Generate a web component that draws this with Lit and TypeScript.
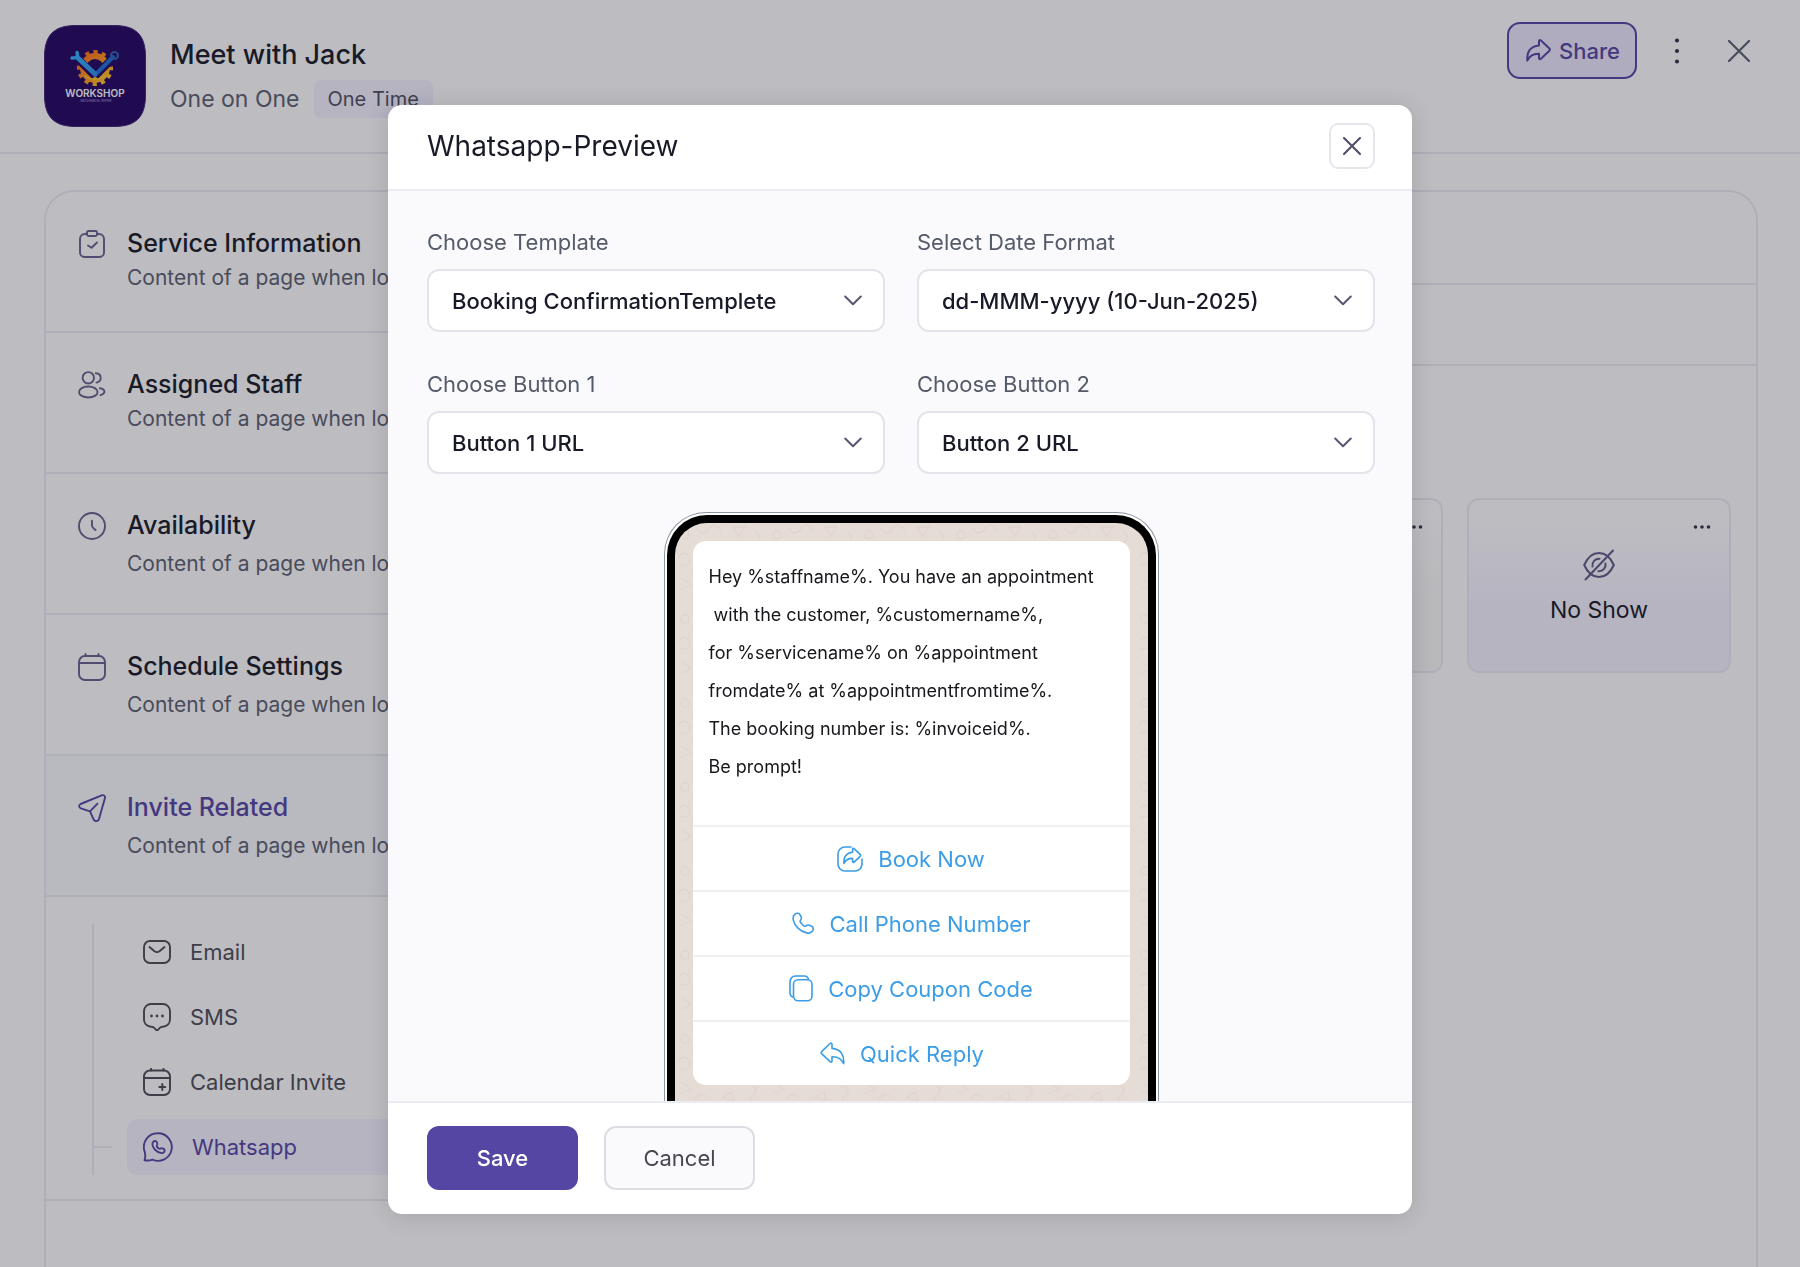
import { LitElement, html, css, svg, nothing } from "lit";
import { customElement, property } from "lit/decorators.js";
import { classMap } from "lit/directives/class-map.js";

type IconDef = { w: number; h: number; body: unknown };

const ARROW =
  "M1.3 21.6C.6 12.6 4.6 7 13 6.4V2.3c0-1.2 1-1.6 1.9-.8l8.3 7.8c.9.8.9 1.8 0 2.6l-8.3 7.8c-.9.8-1.9.4-1.9-.8v-4.1C8 14.5 4 16.5 1.3 21.6z";
const HANDSET =
  "M2.5 1.6C4.3.3 6.6.6 7.6 2.3l1 2.2c.6 1.4.3 2.4-.5 3.3-.6.8-.6 1.5 0 2.3 1 1.3 2 2.3 3.2 3.2.8.6 1.6.6 2.3 0 1-.8 2-1 3.3-.5l2.2 1c1.9.9 2.1 3.2.9 4.8-1.3 1.8-3.3 2.4-6 1.8C7.7 19 2 13.3.8 7.6.3 5 .9 2.9 2.5 1.6z";

const ICONS: Record<string, IconDef> = {
  clipboard: {
    w: 28, h: 28,
    body: svg`<path d="M9 4H7a5 5 0 0 0-5 5v13.500a4.500 4.500 0 0 0 4.500 4.500h15a4.500 4.500 0 0 0 4.500-4.500V9a5 5 0 0 0-5-5h-2"/><rect x="9" y="1" width="10" height="5" rx="1.500"/><path d="M10 15.500l3.500 2.300 5.500-5.300"/>`,
  },
  users: {
    w: 28, h: 28,
    body: svg`<circle cx="10.300" cy="6.800" r="5.700"/><ellipse cx="10.300" cy="21" rx="9.300" ry="5.500"/><path d="M17.800 2.200c3 .2 4.900 2 4.900 4.600s-1.600 4.300-4.200 4.800M21.800 17.200c2.800.4 4.600 1.600 4.600 3.400s-1.500 3-4 3.600"/>`,
  },
  clock: { w: 28, h: 28, body: svg`<circle cx="14" cy="14" r="13"/><path d="M14 8.800v5c0 1.500 1.500 2.500 3.600 4.200"/>` },
  calendar: { w: 28, h: 28, body: svg`<rect x="1" y="3" width="26" height="24" rx="6"/><path d="M1 10h26M7.500 1v2M20.500 1v2"/>` },
  plane: {
    w: 28, h: 28,
    body: svg`<path d="M2.600 10L23.600 1.300c2.200-.7 3.900.6 3.300 2.900L21 25.100c-.8 2.500-4.300 2.700-5.400.3L12 17.300 3 14.400C.7 13.600.5 10.900 2.600 10z"/><path d="M12 17.300l7.500-7.600"/>`,
  },
  mail: { w: 28, h: 28, body: svg`<rect x="1" y="3" width="26" height="22" rx="6"/><path d="M6.500 9l5 4.200c1.600 1.200 3.400 1.200 5 0l5-4.200"/>` },
  chat: {
    w: 28, h: 28,
    body: svg`<path d="M8 1h12a7 7 0 0 1 7 7v8.500a7 7 0 0 1-6 7c-3 .3-3.800.4-4.700 1.700l-1.100 1.500q-1.200 1.200-2.400 0l-1.100-1.500c-.9-1.300-1.700-1.400-4.700-1.700a7 7 0 0 1-6-7V8a7 7 0 0 1 7-7z"/><path d="M8.500 13h.01M14 13h.01M19.500 13h.01" stroke-width="2.800"/>`,
  },
  calendarPlus: {
    w: 28, h: 28,
    body: svg`<rect x="1" y="2.500" width="26" height="24.500" rx="6"/><path d="M1 10h26M8 .8v1.700M20.500 .8v1.700M19.300 16v6M16.300 19h6"/>`,
  },
  whatsapp: {
    w: 30, h: 30,
    body: svg`<path d="M15 1.200a13.800 13.800 0 1 1-5.600 26.400c-2 .9-5 1.100-7.900.7.900-2.700 1.100-5 .3-8.300A13.800 13.800 0 0 1 15 1.200z"/><path transform="translate(9 8.500) scale(.61)" stroke-width="3" d="${HANDSET}"/>`,
  },
  share: { w: 25, h: 23, body: svg`<path d="${ARROW}"/>` },
  close: { w: 22, h: 22, body: svg`<path d="M1 1l20 20M21 1L1 21"/>` },
  closeSmall: { w: 18, h: 18, body: svg`<path d="M1 1l16 16M17 1L1 17"/>` },
  chevron: { w: 18, h: 11, body: svg`<path d="M1.200 1.500L9 9.300l7.800-7.800"/>` },
  more: { w: 6, h: 26, body: svg`<path d="M3 2.500h.01M3 13h.01M3 23.500h.01" stroke-width="4.200"/>` },
  dots: { w: 18, h: 6, body: svg`<path d="M2.500 3h.01M9 3h.01M15.500 3h.01" stroke-width="3.600"/>` },
  eyeOff: {
    w: 32, h: 32,
    body: svg`<path d="M1.200 16C4.500 8.500 9.500 4 16 4s11.500 4.500 14.800 12C27.500 23.500 22.500 28 16 28S4.500 23.500 1.200 16z"/><path d="M9.500 17.500c-.6-4.500 2.500-8 7-7.800M22.500 14.500c.6 4.500-2.500 8-7 7.800M2.500 30.500L30 1.500"/>`,
  },
  bookNow: {
    w: 26, h: 26,
    body: svg`<path d="M14 1H8a7 7 0 0 0-7 7v10a7 7 0 0 0 7 7h10a7 7 0 0 0 7-7v-5"/><path transform="translate(6 1.500) scale(.74)" stroke-width="2.200" d="${ARROW}"/>`,
  },
  phone: { w: 23, h: 23, body: svg`<path transform="translate(.5 .5)" d="${HANDSET}"/>` },
  copy: {
    w: 24, h: 27,
    body: svg`<path d="M19.500 4.500c-.5-2.200-2-3.500-4.200-3.500H6.500A5.500 5.500 0 0 0 1 6.500V18c0 2.200 1.200 3.600 3.500 4.200"/><rect x="4.500" y="4.800" width="18.500" height="21" rx="4.500"/>`,
  },
  reply: { w: 25, h: 23, body: svg`<path transform="translate(25 0) scale(-1 1)" d="${ARROW}"/>` },
};

@customElement("ui-icon")
class UiIcon extends LitElement {
  @property() name = "";
  @property({ type: Number }) stroke = 1.9;

  static styles = css`
    :host { display: inline-flex; flex: none; }
    .icon { fill: none; stroke: currentColor; stroke-linecap: round; stroke-linejoin: round; }
  `;

  render() {
    const icon = ICONS[this.name];
    if (!icon) return nothing;
    return html`<svg class="icon" width=${icon.w} height=${icon.h} viewBox="0 0 ${icon.w} ${icon.h}"
      stroke-width=${this.stroke} aria-hidden="true">${icon.body}</svg>`;
  }
}

@customElement("workshop-logo")
class WorkshopLogo extends LitElement {
  static styles = css`
    :host { display: block; flex: none; }
    .logo { display: block; }
    .name { font: 600 10px Inter, sans-serif; fill: #fff; }
    .tag { font: 400 3px Inter, sans-serif; fill: #b9a8e8; }
  `;

  render() {
    return html`<svg class="logo" width="102" height="102" viewBox="0 0 102 102" role="img" aria-label="Workshop">
      <defs>
        <linearGradient id="gear" gradientUnits="userSpaceOnUse" x1="36" y1="28" x2="66" y2="58">
          <stop offset="0" stop-color="#ff6a1c" /><stop offset=".6" stop-color="#ff9f1c" /><stop offset="1" stop-color="#ffd42e" />
        </linearGradient>
        <linearGradient id="steel" gradientUnits="userSpaceOnUse" x1="30" y1="28" x2="54" y2="54">
          <stop offset="0" stop-color="#35b5ff" /><stop offset="1" stop-color="#2d86e8" />
        </linearGradient>
      </defs>
      <path d="M32 .5h38C92 .5 101.500 10 101.500 32v38c0 22-9.500 31.500-31.500 31.500H32C10 101.500.5 92 .5 70V32C.5 10 10 .5 32 .5z" fill="#220560" stroke="#43227c" />
      <g fill="none" stroke="url(#gear)">
        <circle cx="51" cy="43" r="12" stroke-width="6" />
        <circle cx="51" cy="43" r="16" stroke-width="4" stroke-dasharray="4.188 4.188" stroke-dashoffset="2" />
      </g>
      <g fill="none" stroke="#220560" stroke-width="8"><path d="M33 33l18 18M69 33L51 51" /></g>
      <g fill="none" stroke="url(#steel)" stroke-linecap="round">
        <path d="M69 32L51 50" stroke-width="4" stroke="#1f6fd6" />
        <circle cx="70.500" cy="30.500" r="3.500" stroke-width="2.200" stroke="#2b5fae" />
        <path d="M34 33l17 16" stroke-width="5" />
        <path d="M33 27.500c1.500 3.500-.5 6-5 5.500" stroke-width="3.400" />
        <path d="M41 51q10 7 20 0" stroke="#ffd42e" stroke-width="1" />
      </g>
      <text class="name" x="51" y="72" text-anchor="middle">WORKSHOP</text>
      <text class="tag" x="52" y="77" text-anchor="middle">MECHANICAL REPAIR</text>
    </svg>`;
  }
}

const STEPS = [
  { icon: "clipboard", title: "Service Information", tight: true },
  { icon: "users", title: "Assigned Staff", tight: true },
  { icon: "clock", title: "Availability" },
  { icon: "calendar", title: "Schedule Settings" },
  { icon: "plane", title: "Invite Related", active: true },
];

const CHANNELS = [
  { icon: "mail", label: "Email" },
  { icon: "chat", label: "SMS" },
  { icon: "calendarPlus", label: "Calendar Invite" },
  { icon: "whatsapp", label: "Whatsapp", active: true },
];

const FIELDS = [
  { id: "template", label: "Choose Template", value: "Booking ConfirmationTemplete" },
  { id: "date-format", label: "Select Date Format", value: "dd-MMM-yyyy (10-Jun-2025)" },
  { id: "button-1", label: "Choose Button 1", value: "Button 1 URL" },
  { id: "button-2", label: "Choose Button 2", value: "Button 2 URL" },
];

const MESSAGE = [
  "Hey %staffname%. You have an appointment",
  " with the customer, %customername%,",
  "for %servicename% on %appointment",
  "fromdate% at %appointmentfromtime%.",
  "The booking number is: %invoiceid%.",
  "Be prompt!",
].join("\n");

const ACTIONS = [
  { icon: "bookNow", label: "Book Now" },
  { icon: "phone", label: "Call Phone Number" },
  { icon: "copy", label: "Copy Coupon Code" },
  { icon: "reply", label: "Quick Reply", shifted: true },
];

@customElement("app-root")
class AppRoot extends LitElement {
  static styles = css`
    :host {
      --line: #ebebf4;
      --ink: #191a28;
      --muted: #5b6070;
      --brand: #5546a4;
      --tint: #f5f2ff;
      display: block;
      font-family: Inter, "Liberation Sans", sans-serif;
      font-size: 22px;
      color: var(--ink);
      background: #fff;
    }
    *, *::before, *::after { box-sizing: border-box; }
    h1, h2, p, ul { margin: 0; padding: 0; font-weight: 400; }
    ul { list-style: none; }
    button, select { font: inherit; color: inherit; background: none; border: 0; padding: 0; margin: 0; cursor: pointer; }
    a { color: inherit; text-decoration: none; }

    .page { height: 100vh; display: flex; flex-direction: column; overflow: hidden; }

    .top { display: flex; align-items: flex-start; height: 154px; flex: none; padding: 22px 50px 0 44px; border-bottom: 2px solid var(--line); }
    .top workshop-logo { margin: 3px 24px 0 0; }
    .heading { flex: 1; padding-top: 15px; }
    .heading h1 { font-size: 27px; font-weight: 500; line-height: 36px; }
    .meta { display: flex; align-items: center; gap: 14px; margin-top: 7px; }
    .kind { font-size: 23px; color: var(--muted); }
    .badge { font-size: 20px; line-height: 38px; padding: 0 14px; border-radius: 7px; background: var(--tint); color: #50505f; }
    .tools { display: flex; align-items: center; }
    .share { display: flex; align-items: center; gap: 8px; height: 57px; padding: 0 15px 0 17px; border: 2px solid var(--brand); border-radius: 13px; background: #ece8fd; color: var(--brand); font-weight: 500; }
    .tool { display: flex; color: var(--muted); }
    .more { margin-left: 37px; color: #33334a; }
    .leave { margin-left: 48px; }

    .panel { flex: 1; min-height: 0; display: flex; margin: 36px 42px 0 44px; border: 2px solid var(--line); border-bottom: 0; border-radius: 30px 30px 0 0; overflow: hidden; }
    .side { flex: 0 0 31%; }
    .step { display: flex; align-items: flex-start; gap: 21px; min-height: 141px; padding: 35px 32px 0; border-bottom: 2px solid var(--line); color: #67608d; }
    .step ui-icon { margin-top: 3px; }
    .step-text { display: flex; flex-direction: column; gap: 8px; }
    .step.tight .step-text { gap: 4px; }
    .step-title { font-size: 25px; font-weight: 500; line-height: 32px; color: var(--ink); }
    .step-sub { font-size: 21px; line-height: 30px; color: var(--muted); white-space: nowrap; }
    .step.active { background: #f9f9fe; color: var(--brand); }
    .step.active .step-title { color: var(--brand); }

    .channels { padding: 27px 0 24px 46px; border-bottom: 2px solid var(--line); }
    .channel-list { display: flex; flex-direction: column; gap: 9px; border-left: 2px solid var(--line); }
    .channel { display: flex; align-items: center; gap: 15px; }
    .channel::before { content: ""; flex: 0 0 18px; height: 2px; }
    .channel.active::before { background: var(--line); }
    .channel-link { flex: 1; display: flex; align-items: center; gap: 19px; height: 56px; padding-left: 16px; border-radius: 10px; color: #4c4c57; }
    .channel.active .channel-link { background: var(--tint); color: var(--brand); }

    .content { flex: 1; }
    .strip { border-bottom: 2px solid var(--line); }
    .strip.tall { height: 93px; }
    .strip.short { height: 81px; }
    .cards { display: flex; justify-content: flex-end; gap: 24px; padding: 132px 25px 0; }
    .card { flex: 0 0 264px; height: 175px; display: flex; flex-direction: column; align-items: center; padding: 24px 18px; border: 2px solid var(--line); border-radius: 12px; background: linear-gradient(#fff 10%, #f9f9f8 60%); }
    .card.tinted { background: linear-gradient(#fff 10%, var(--tint) 65%); }
    .card-more { display: flex; align-self: flex-end; color: #33334a; }
    .card ui-icon.status { margin: 19px 0 13px; color: #5f5a86; }
    .card-name { font-size: 23px; line-height: 32px; }

    .scrim { position: fixed; inset: 0; display: flex; justify-content: center; padding: 105px 24px 53px; background: rgba(27, 27, 40, 0.29); }
    .modal { width: 100%; max-width: 1024px; display: flex; flex-direction: column; border-radius: 14px; background: #fff; overflow: hidden; box-shadow: 0 2px 22px rgba(20, 20, 40, 0.16); }
    .modal-head { flex: none; display: flex; align-items: center; justify-content: space-between; padding: 18px 37px 20px 39px; border-bottom: 2px solid var(--line); }
    .modal-head h2 { font-size: 28px; line-height: 46px; }
    .modal-close { display: grid; place-items: center; width: 46px; height: 46px; border: 2px solid #e6e6ec; border-radius: 9px; color: #4d4b66; }

    .modal-body { flex: 1; min-height: 0; overflow: hidden; padding: 36px 37px 0 39px; background: #fafafd; }
    .fields { display: grid; grid-template-columns: 1fr 1fr; gap: 37px 32px; }
    .field { display: flex; flex-direction: column; gap: 12px; }
    .field label { line-height: 30px; color: #555b69; }
    .control { display: grid; align-items: center; }
    .control select, .control ui-icon { grid-area: 1 / 1; }
    .control select { appearance: none; width: 100%; height: 63px; padding: 0 60px 0 23px; border: 2px solid #e3e3eb; border-radius: 12px; background: #fff; font-weight: 500; }
    .control ui-icon { justify-self: end; margin-right: 23px; color: #5a5673; pointer-events: none; }

    .stage { display: flex; justify-content: center; padding: 38px 0 0 20px; }
    .phone { width: 495px; padding: 2px 2px 0; border: 1px solid #8d95a3; border-bottom: 0; border-radius: 42px 42px 0 0; background: #fff; }
    .frame { height: 780px; border: solid #000; border-width: 8px 8px 0; border-radius: 40px 40px 0 0; background: #e5dcd6; overflow: hidden; display: grid; }
    .wallpaper, .thread { grid-area: 1 / 1; }
    .wallpaper { width: 100%; height: 100%; }
    .thread { padding: 18px; }
    .bubble { border-radius: 13px; background: #fff; overflow: hidden; }
    .message { font-size: 18px; line-height: 38px; padding: 17px 16px 39px; white-space: pre-wrap; color: #17171c; }
    .action { display: flex; align-items: center; justify-content: center; gap: 15px; width: 100%; height: 65px; border-top: 2px solid #f0f0f1; color: #3c9de6; }
    .action.shifted { padding-right: 18px; }

    .modal-foot { flex: none; display: flex; gap: 26px; padding: 23px 39px 24px; border-top: 2px solid var(--line); }
    .btn { width: 151px; height: 64px; border-radius: 12px; }
    .btn.primary { background: var(--brand); color: #fff; font-weight: 500; }
    .btn.plain { border: 2px solid #dcdce3; background: #fafafd; color: #474752; }
  `;

  private renderStep = (s: (typeof STEPS)[number]) => html`
    <a href="#" class=${classMap({ step: true, tight: !!s.tight, active: !!s.active })}>
      <ui-icon name=${s.icon}></ui-icon>
      <span class="step-text">
        <span class="step-title">${s.title}</span>
        <span class="step-sub">Content of a page when lo</span>
      </span>
    </a>`;

  private renderField = (f: (typeof FIELDS)[number]) => html`
    <div class="field">
      <label for=${f.id}>${f.label}</label>
      <div class="control">
        <select id=${f.id}><option>${f.value}</option></select>
        <ui-icon name="chevron" stroke="2"></ui-icon>
      </div>
    </div>`;

  private renderWallpaper() {
    return html`<svg class="wallpaper" aria-hidden="true">
      <defs>
        <pattern id="doodles" width="92" height="84" patternUnits="userSpaceOnUse">
          <g fill="none" stroke="#dfd5ce" stroke-width="1.300" stroke-linecap="round">
            <circle cx="10" cy="12" r="4" /><path d="M22 6q6 8 12 0t12 2M58 4l6 9 6-9zM80 8q8 6 0 12" />
            <path d="M4 34q6-8 10 0t-8 8M26 24h12v9H26zM50 26c4-5 10 0 5 6-6-3-8-5-5-6M74 30l10 6M76 40q5-6 11-2" />
            <circle cx="40" cy="50" r="5" /><path d="M8 56l8 6-9 4M58 48q8 10 14 2M20 72q5-8 12-2M48 70l9-5 2 9zM78 60q7 3 0 9t4 6" />
          </g>
        </pattern>
      </defs>
      <rect width="100%" height="100%" fill="url(#doodles)" />
    </svg>`;
  }

  render() {
    return html`
      <div class="page">
        <header class="top">
          <workshop-logo></workshop-logo>
          <div class="heading">
            <h1>Meet with Jack</h1>
            <div class="meta"><span class="kind">One on One</span><span class="badge">One Time</span></div>
          </div>
          <div class="tools">
            <button class="share"><ui-icon name="share" stroke="2"></ui-icon>Share</button>
            <button class="tool more" aria-label="More"><ui-icon name="more"></ui-icon></button>
            <button class="tool leave" aria-label="Close page"><ui-icon name="close" stroke="2.2"></ui-icon></button>
          </div>
        </header>
        <main class="panel">
          <nav class="side">
            ${STEPS.map(this.renderStep)}
            <div class="channels">
              <ul class="channel-list">
                ${CHANNELS.map(c => html`<li class=${classMap({ channel: true, active: !!c.active })}>
                  <a class="channel-link" href="#"><ui-icon name=${c.icon}></ui-icon>${c.label}</a>
                </li>`)}
              </ul>
            </div>
          </nav>
          <section class="content">
            <div class="strip tall"></div>
            <div class="strip short"></div>
            <div class="cards">
              <article class="card">
                <button class="card-more" aria-label="Card options"><ui-icon name="dots"></ui-icon></button>
              </article>
              <article class="card tinted">
                <button class="card-more" aria-label="No Show options"><ui-icon name="dots"></ui-icon></button>
                <ui-icon class="status" name="eyeOff" stroke="2"></ui-icon>
                <span class="card-name">No Show</span>
              </article>
            </div>
          </section>
        </main>
      </div>

      <div class="scrim">
        <div class="modal" role="dialog" aria-modal="true" aria-labelledby="modal-title">
          <header class="modal-head">
            <h2 id="modal-title">Whatsapp-Preview</h2>
            <button class="modal-close" aria-label="Close"><ui-icon name="closeSmall" stroke="2"></ui-icon></button>
          </header>
          <div class="modal-body">
            <div class="fields">${FIELDS.map(this.renderField)}</div>
            <div class="stage">
              <div class="phone">
                <div class="frame">
                  ${this.renderWallpaper()}
                  <div class="thread">
                    <div class="bubble">
                      <p class="message">${MESSAGE}</p>
                      ${ACTIONS.map(a => html`<button class=${classMap({ action: true, shifted: !!a.shifted })}>
                        <ui-icon name=${a.icon} stroke="1.6"></ui-icon>${a.label}
                      </button>`)}
                    </div>
                  </div>
                </div>
              </div>
            </div>
          </div>
          <footer class="modal-foot">
            <button class="btn primary">Save</button>
            <button class="btn plain">Cancel</button>
          </footer>
        </div>
      </div>
    `;
  }
}
